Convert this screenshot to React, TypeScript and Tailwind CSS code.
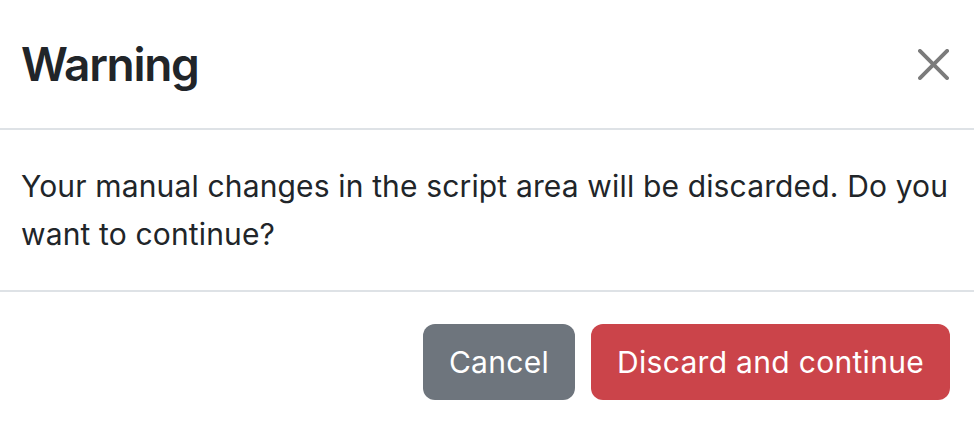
import React from 'react';

export default function App() {
  const closeIcon =
    'M.293.293a1 1 0 0 1 1.414 0L8 6.586 14.293.293a1 1 0 1 1 1.414 1.414L9.414 8l6.293 6.293a1 1 0 0 1-1.414 1.414L8 9.414l-6.293 6.293a1 1 0 0 1-1.414-1.414L6.586 8 .293 1.707a1 1 0 0 1 0-1.414z';

  return (
    <main className="w-[974px] h-[428px] overflow-hidden bg-white text-[#212529] font-['Inter','Liberation_Sans',sans-serif]">
      {/* header */}
      <header className="flex items-center justify-between h-[130px] pl-[21px] pr-[25px] border-b-2 border-[#dee2e6]">
        <h1 className="text-[46px] leading-none font-semibold tracking-[-1.3px]">Warning</h1>
        <button className="w-[31px] h-[31px] flex items-center justify-center" aria-label="Close">
          <svg viewBox="0 0 16 16" className="w-[31px] h-[31px]" fill="#7b7b7b">
            <path d={closeIcon} />
          </svg>
        </button>
      </header>

      {/* body */}
      <section className="h-[162px] px-[21px] pt-[32px] border-b-2 border-[#dee2e6] text-[30px] leading-[48px] tracking-[0.15px]">
        <p>Your manual changes in the script area will be discarded. Do you want to continue?</p>
      </section>

      {/* footer */}
      <footer className="flex justify-end gap-[16px] pt-[32px] pr-[24px]">
        <button className="h-[76px] px-[26px] rounded-[12px] bg-[#6e757d] text-white text-[30px] leading-none tracking-[0.3px]">
          Cancel
        </button>
        <button className="h-[76px] px-[26px] rounded-[12px] bg-[#cb444a] text-white text-[30px] leading-none tracking-[0.3px]">
          Discard and continue
        </button>
      </footer>
    </main>
  );
}
